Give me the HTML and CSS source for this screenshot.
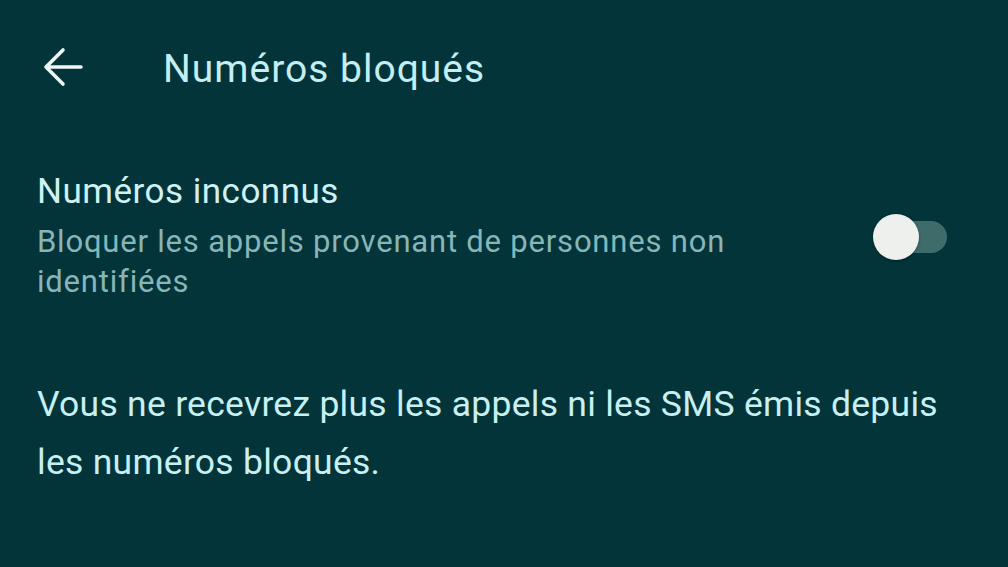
FILE: index.html
```html
<!DOCTYPE html>
<html lang="fr">
<head>
    <meta charset="UTF-8">
    <meta name="viewport" content="width=device-width, initial-scale=1.0">
    <title>Numéros bloqués</title>
    <link rel="stylesheet" href="styles.css">
</head>
<body>
    <!-- Top bar -->
    <header class="topbar">
        <button class="back" aria-label="Retour">
            <svg width="44" height="44" viewBox="0 0 44 44">
                <path d="M40 22H5M22 5L5 22L22 39" fill="none" stroke="currentColor" stroke-width="3.6" stroke-linecap="round" stroke-linejoin="round"/>
            </svg>
        </button>
        <h1 class="title">Numéros bloqués</h1>
    </header>

    <!-- Unknown numbers setting -->
    <div class="setting">
        <div class="setting-text">
            <div class="setting-name">Numéros inconnus</div>
            <div class="setting-desc">Bloquer les appels provenant de personnes non identifiées</div>
        </div>
        <div class="switch">
            <div class="track"></div>
            <div class="thumb"></div>
        </div>
    </div>

    <p class="note">Vous ne recevrez plus les appels ni les SMS émis depuis les numéros bloqués.</p>
</body>
</html>
```

FILE: styles.css
```css
body {
    margin: 0;
    height: 567px;
    overflow: hidden;
    background: #02343a;
    font-family: Roboto, "Noto Sans", sans-serif;
    color: #c6eef0;
}

.topbar {
    display: flex;
    align-items: center;
    height: 48px;
    padding: 43px 0 0 41px;
}

.back {
    width: 44px;
    height: 44px;
    padding: 0;
    border: none;
    background: none;
    color: #eef6f6;
    display: flex;
}

.title {
    margin: 4px 0 0 78px;
    font-size: 39px;
    line-height: 48px;
    font-weight: 400;
    letter-spacing: 1px;
    color: #c4eef1;
}

.setting {
    display: flex;
    align-items: center;
    padding: 81px 61px 0 37px;
}

.setting-text {
    flex: 1;
    max-width: 760px;
}

.setting-name {
    font-size: 35px;
    line-height: 40px;
    letter-spacing: 0.5px;
    color: #d0f1f3;
}

.setting-desc {
    margin-top: 10px;
    font-size: 31px;
    line-height: 40px;
    letter-spacing: 0.8px;
    color: #88b6b8;
}

.switch {
    position: relative;
    width: 74px;
    height: 46px;
    margin-left: auto;
}

.track {
    position: absolute;
    left: 8px;
    right: 0;
    top: 7px;
    height: 32px;
    border-radius: 16px;
    background: #3e6c6b;
}

.thumb {
    position: absolute;
    left: 0;
    top: 0;
    width: 46px;
    height: 46px;
    border-radius: 50%;
    background: #eef0ee;
    box-shadow: 0 1px 3px rgba(0, 0, 0, 0.35);
}

.note {
    margin: 73px 48px 0 37px;
    font-size: 35.5px;
    line-height: 58px;
    letter-spacing: 0.27px;
    color: #c8eff1;
}
```
